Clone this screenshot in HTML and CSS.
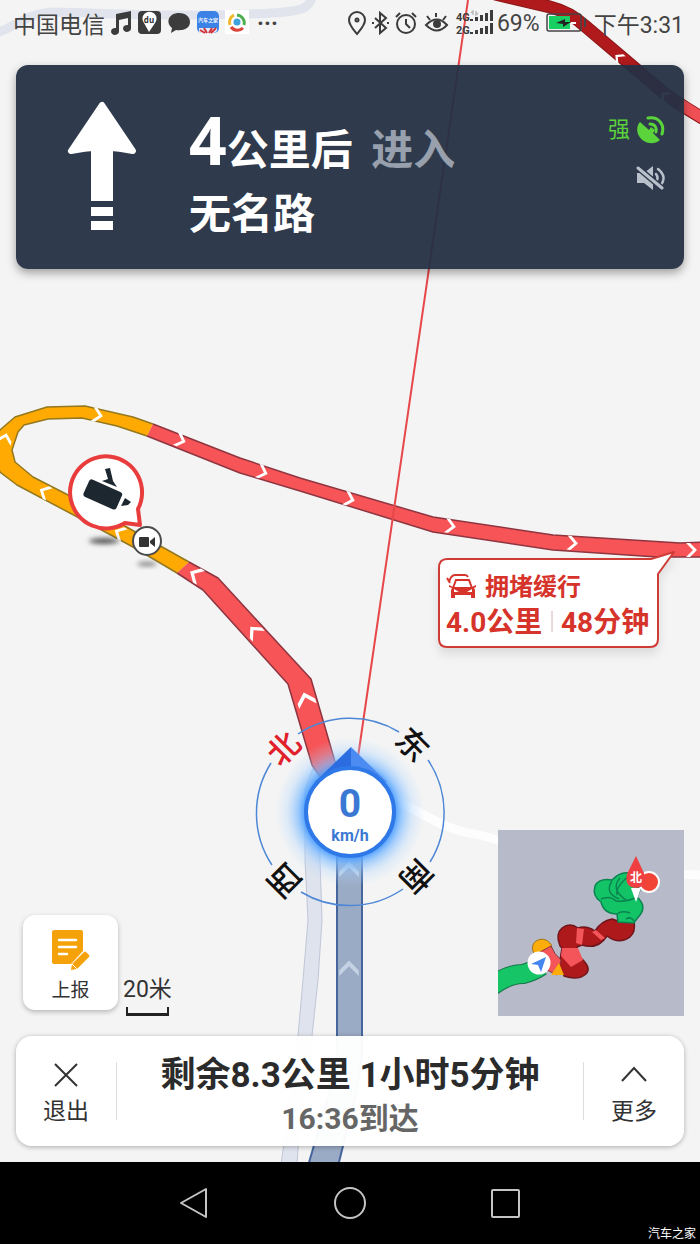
FILE: index.html
```html
<!DOCTYPE html>
<html lang="zh-CN">
<head>
<meta charset="utf-8">
<meta name="viewport" content="width=device-width, initial-scale=1">
<title>导航</title>
<link rel="stylesheet" href="styles.css">
</head>
<body>
<div class="phone">
<main class="screen">
  <svg class="map" viewBox="0 0 700 1162" preserveAspectRatio="xMidYMid slice" role="img" aria-label="导航地图">
    <defs>
      <path id="chev" d="M-5 -7 H-1 L6 0 L-1 7 H-5 L2 0 Z"/>
      <radialGradient id="glow">
        <stop offset="0.58" stop-color="#3d96ff"/>
        <stop offset="0.7" stop-color="#7dbbff" stop-opacity="0.7"/>
        <stop offset="0.84" stop-color="#a5d0ff" stop-opacity="0.3"/>
        <stop offset="1" stop-color="#b8dbff" stop-opacity="0"/>
      </radialGradient>
      <filter id="soft" x="-30%" y="-100%" width="160%" height="300%"><feGaussianBlur stdDeviation="2.5"/></filter>
      <filter id="pinShadow" x="-10%" y="-10%" width="120%" height="140%"><feDropShadow dx="0" dy="6" stdDeviation="5" flood-color="#000" flood-opacity="0.1"/></filter>
    </defs>

    <g fill="none">
      <path stroke="#e1e4ec" stroke-width="9" d="M-4 33 C18 26 28 12 55 12 C100 13 150 16 205 15 C250 14 290 14 304 8 Q311 4 312 -4"/>
      <path stroke="#fdfdfd" stroke-width="9" d="M395 801 C425 812 440 830 480 835 C510 843 540 856 590 864 S660 874 704 875"/>
    </g>
    <path fill="#dfe3ed" stroke="#c0c6d8" d="M314 766 L326 780 L320 800 L320 860 L322 920 L318 980 L312 1036 L298 1150 L297 1164 L281 1164 L283 1150 L298 1036 L303 980 L308 920 L305 860 L305 790 Z"/>
    <path fill="#9aabc5" stroke="#45659c" stroke-width="2" d="M337 830 H362 V1050 Q361 1070 355 1098 L338 1166 H308 L330 1090 Q337 1065 337 1045 Z"/>

    <path fill="none" stroke="#8a1719" stroke-width="13" d="M495 -6 L550 7 Q570 12 585 26 L664 93 Q680 105 704 119"/>
    <path fill="none" stroke="#b01a1d" stroke-width="11" d="M495 -6 L550 7 Q570 12 585 26 L664 93 Q680 105 704 119"/>
    <path fill="none" stroke="#f05055" stroke-width="11" d="M680 104 L704 119"/>

    <path fill="#ffaa02" d="M153 424 L133 417 L85 406 L47 407 L15 417 L0 430 L-9 450 L0 472 L17 485 L83 520 L133 547 L177 573 L189 562 L123 525 L70 496 L33 477 L15 462 L12 450 L18 432 L24 425 L48 419 L82 418 L117 426 L147 436 Z"/>
    <path fill="#f65457" d="M153 424 L240 458 L300 478 L433 517 L553 535 L680 543 L706 542 V557 L657 557 L553 550 L433 532 L300 491 L240 473 L147 436 Z"/>
    <path fill="#f65457" d="M189 562 L218 578 L311 679 L336 765 L336 780 L320 777 L312 765 L288 684 L203 590 L177 573 Z"/>
    <g fill="none" stroke-width="1.5" stroke-linejoin="round">
      <path stroke="#93781f" d="M153 424 L133 417 L85 406 L47 407 L15 417 L0 430 L-9 450 L0 472 L17 485 L83 520 L133 547 L177 573 M189 562 L123 525 L70 496 L33 477 L15 462 L12 450 L18 432 L24 425 L48 419 L82 418 L117 426 L147 436"/>
      <path stroke="#8f3540" d="M153 424 L240 458 L300 478 L433 517 L553 535 L680 543 L706 542 M706 557 L657 557 L553 550 L433 532 L300 491 L240 473 L147 436 M189 562 L218 578 L311 679 L336 765 M320 777 L312 765 L288 684 L203 590 L177 573"/>
    </g>

    <g fill="#fff">
      <use href="#chev" transform="translate(97 415) rotate(12)"/>
      <use href="#chev" transform="translate(180 440) rotate(20)"/>
      <use href="#chev" transform="translate(262 472) rotate(19)"/>
      <use href="#chev" transform="translate(349 499) rotate(17)"/>
      <use href="#chev" transform="translate(450 526) rotate(9)"/>
      <use href="#chev" transform="translate(572 543) rotate(5)"/>
      <use href="#chev" transform="translate(691 550)"/>
      <use href="#chev" transform="translate(5 439) rotate(-75)"/>
      <use href="#chev" transform="translate(45 492) rotate(-152)"/>
      <use href="#chev" transform="translate(120 533) rotate(-152)"/>
      <use href="#chev" transform="translate(196 575) rotate(-150) scale(1.15)"/>
      <use href="#chev" transform="translate(255 632) rotate(-132) scale(1.15)"/>
      <use href="#chev" transform="translate(306 700) rotate(-107) scale(1.3)"/>
      <use href="#chev" transform="translate(619 58) rotate(-140) scale(0.8)"/>
      <use href="#chev" transform="translate(665 96) rotate(-140) scale(0.8)"/>
      <use href="#chev" fill="#c5d2e4" transform="translate(349 870) rotate(-90) scale(1.4)"/>
      <use href="#chev" fill="#c5d2e4" transform="translate(349 969) rotate(-90) scale(1.4)"/>
    </g>
    <path stroke="#e8474a" stroke-width="2" d="M468 0 L358 757"/>

    <ellipse cx="104" cy="541" rx="15" ry="3" fill="#555" filter="url(#soft)"/>
    <ellipse cx="147" cy="564" rx="10" ry="2" fill="#777" filter="url(#soft)"/>
    <path fill="#fff" stroke="#e93d3d" stroke-width="4" stroke-linejoin="round" d="M140 525 L138 509 A36 36 0 1 0 125 523 Z"/>
    <g fill="#1d2730">
      <rect x="-18" y="-9" width="36" height="19" rx="3" transform="translate(103 494) rotate(24)"/>
      <path d="M105 469 L110 468 L113 481 L117 487 L102 481 L108 479 Z"/>
      <path d="M125 498 L131 502 L128 505 L121 506 Z"/>
    </g>
    <circle cx="147" cy="541" r="14" fill="#fff" stroke="#4a4a4a" stroke-width="2"/>
    <rect x="139" y="537" width="10" height="10" rx="1" fill="#333"/><path fill="#333" d="M150 541 L155 537 V547 L150 543 Z"/>

    <g class="jam">
      <path filter="url(#pinShadow)" fill="#fff" stroke="#cf3a36" stroke-width="2" stroke-linejoin="round" d="M447 559 H651 L674 552 L658 574 V639 Q658 647 650 647 H447 Q439 647 439 639 V568 Q439 559 447 559 Z"/>
      <g fill="none" stroke="#d6332b" stroke-width="2"><path d="M447 578 L450 583 M449 582 Q451 575 455 575 H465 Q467 575 468 577"/><path d="M453 588 L456 580 H469 L472 588"/></g>
      <path fill="#d6332b" fill-rule="evenodd" d="M449 585 L453 587 H472 L476 585 V587 L474 588 L475 590 V598 H471 V595 H455 V598 H451 V590 L452 588 L449 587 Z M454 589 V592 H459 Z M472 589 L467 592 H472 Z"/>
      <text x="485" y="595" class="jam-title">拥堵缓行</text>
      <text x="446" y="632" class="jam-data">4.0公里</text>
      <path stroke="#d4b5b5" d="M552 611 V632"/>
      <text x="561" y="632" class="jam-data">48分钟</text>
    </g>

    <circle cx="350" cy="812" r="75" fill="url(#glow)"/>
    <g fill="none" stroke="#4d87d6" stroke-width="1.5">
      <path d="M298 734 A94 94 0 0 1 399 732"/><path d="M428 760 A94 94 0 0 1 430 862"/>
      <path d="M403 889 A94 94 0 0 1 301 892"/><path d="M272 865 A94 94 0 0 1 271 763"/>
    </g>
    <path fill="#2b6de0" d="M351 747 L315 782 H351 Z"/><path fill="#4c8cf2" d="M351 747 L387 782 H351 Z"/>
    <circle cx="350" cy="812" r="44" fill="#fff" stroke="#2f78e8" stroke-width="4"/>
    <g class="speed" text-anchor="middle"><text x="350" y="817" class="speed-num">0</text><text x="350" y="841" class="speed-unit">km/h</text></g>
    <g class="compass" text-anchor="middle">
      <text class="north" transform="translate(284 749) rotate(-45)" y="11">北</text>
      <text transform="translate(412 745) rotate(45)" y="11">东</text>
      <text transform="translate(416 876) rotate(135)" y="11">南</text>
      <text transform="translate(285 880) rotate(-135)" y="11">西</text>
    </g>
  </svg>

  <header class="status">
    <span>中国电信</span>
    <svg class="status-icons" width="142" height="26" viewBox="0 0 142 26">
      <g fill="#3c3c3c">
        <path d="M7 4 L22 1 V18 A4 3.500 0 1 1 19 15 V8 L10 10 V21 A4 3.500 0 1 1 7 18 Z"/>
        <rect x="29" y="1" width="23" height="23" rx="4"/>
        <path d="M70 3 C77 3 81 7 81 12 C81 18 75 21 67 20 L62 23 L63 18 C56 12 60 3 70 3 Z"/>
      </g>
      <path fill="#fff" d="M40 22 L35 13 A7 7 0 1 1 46 13 Z"/><text x="40" y="13" class="tiny-du" text-anchor="middle">du</text>
      <rect x="88" y="1" width="22" height="22" rx="5" fill="#3b82e6"/><text x="99" y="12" class="tiny-app" text-anchor="middle">汽车之家</text>
      <path fill="#e4e8f5" d="M90 18 H108 V21 Q106 23 104 23 H93 Q90 23 90 21 Z"/><path stroke="#d2343a" stroke-width="2" d="M91 20 L96 23 M95 18 L98 23 M103 18 L100 23 M107 18 L102 23"/>
      <rect x="116" y="0" width="24" height="24" fill="#fff"/>
      <g fill="none" stroke-width="3"><path stroke="#f2b92c" d="M125 5 A8 8 0 0 0 121 15"/><path stroke="#dd4439" d="M122 17 A8 8 0 0 0 134 18"/><path stroke="#4caf50" d="M128 5 A8 8 0 0 1 135 15"/></g>
      <circle cx="128" cy="12" r="3.500" fill="#3ea3dc"/>
    </svg>
    <span class="more-dots">···</span>
    <svg class="status-sys" width="146" height="26" viewBox="0 0 146 26">
      <g fill="none" stroke="#3c3c3c" stroke-width="2">
        <path d="M10 24 C6 19 2 15 2 10 A8 8 0 0 1 18 10 C18 15 14 19 10 24 Z"/><circle cx="10" cy="10" r="1.500"/>
        <path d="M28 8 L39 18 L33 23 V3 L39 8 L28 18"/><path d="M25 13 H27 M40 13 H42"/>
        <circle cx="59" cy="14" r="9"/><path d="M59 9 V14 L63 18 M49 7 L53 3 M65 3 L69 7"/>
        <path d="M79 15 Q90 4 100 15 Q90 26 79 15 Z M89 3 V7 M80 6 L83 10 M99 6 L96 10"/>
      </g>
      <circle cx="90" cy="14" r="4" fill="#3c3c3c"/>
      <text x="109" y="11" class="tiny-net">4G</text><text x="109" y="24" class="tiny-net">2G</text>
      <path stroke="#3c3c3c" stroke-width="3" d="M124.500 11 V9 M129.500 11 V7 M134.500 11 V5 M139.500 11 V3 M144.500 11 V0 M124.500 24 V22 M129.500 24 V20 M134.500 24 V18 M139.500 24 V16 M144.500 24 V13"/>
      <path stroke="#bbb" stroke-width="1.500" fill="none" d="M126 5 V1 L124 3 M129 1 V5 L131 3"/>
    </svg>
    <span>69%</span>
    <svg class="status-battery" width="40" height="20" viewBox="0 0 40 20">
      <rect x="1" y="1" width="34" height="17" rx="2" fill="none" stroke="#444" stroke-width="1.500"/>
      <rect x="3" y="3" width="21" height="13" fill="#18cf62"/><path stroke="#444" stroke-width="2" d="M39 5 V14"/>
      <path fill="#222" d="M10 10 L19 6 V9 H25 L17 14 V11 Z"/><path fill="#fff" d="M25 9 H30 V11 H24 Z"/>
    </svg>
    <span>下午3:31</span>
  </header>

  <section class="banner" aria-label="下一步">
    <svg class="arrow" width="70" height="130" viewBox="0 0 70 130" aria-hidden="true">
      <path fill="#fff" stroke="#fff" stroke-width="6" stroke-linejoin="round" d="M35 4 L4 50 Q20 47 27 47 H43 Q50 47 66 50 Z"/>
      <path fill="#fff" d="M24 44 H46 V100 H24 Z M24 106 H46 V115 H24 Z M24 120 H46 V129 H24 Z"/>
    </svg>
    <h1 class="turn"><span class="turn-line"><span class="num">4</span>公里后 <span class="dim">进入</span></span><span class="turn-line">无名路</span></h1>
    <div class="signals">
      <div class="gps"><span>强</span>
        <svg width="30" height="30" viewBox="0 0 30 30" aria-hidden="true"><path fill="#5bd33a" d="M4 7 L13 15 L15 12 L19 15 L17 18 L24 25 C17 31 7 28 3 21 C0 16 1 10 4 7 Z"/><g fill="none" stroke="#5bd33a" stroke-width="3" stroke-linecap="round"><path d="M12 3 C22 1 29 9 26 19"/><path d="M14 9 C19 9 21 13 20 17"/></g></svg>
      </div>
      <button class="mute" aria-label="静音">
        <svg width="30" height="26" viewBox="0 0 30 26" aria-hidden="true"><path fill="#b9c1cb" d="M1 8 H8 L17 1 V25 L8 18 H1 Z"/><g fill="none" stroke="#b9c1cb" stroke-width="2.500" stroke-linecap="round"><path d="M20 9 Q23 13 20 17"/><path d="M22 4 Q32 12 24 21"/></g><path stroke="#2f3a4c" stroke-width="6" d="M1 2 L27 24"/><path stroke="#b9c1cb" stroke-width="3" stroke-linecap="round" d="M2 3 L26 23"/></svg>
      </button>
    </div>
  </section>

  <div class="tools">
    <button class="report">
      <svg width="38" height="42" viewBox="0 0 38 42" aria-hidden="true"><path fill="#f5a20a" d="M3 0 H29 Q31 0 31 2 V21 L19 34 H3 Q0 34 0 32 V2 Q0 0 3 0 Z"/><path stroke="#fff" stroke-width="2.500" stroke-linecap="round" d="M7 10 H24 M7 17 H24 M7 24 H15"/><path fill="#f5a20a" d="M20 34 L32 22 Q33 21 34 22 L37 25 Q38 26 37 27 L25 39 L19 40 Z"/><path stroke="#fff" d="M20 34 L25 39"/></svg>
      <span>上报</span>
    </button>
    <div class="scale">20米</div>
    <svg class="mini" width="186" height="186" viewBox="0 0 186 186" role="img" aria-label="路线概览">
      <rect width="186" height="186" fill="#b7bbc9"/>
      <path fill="none" stroke="#17754a" stroke-width="20" d="M-6 156 Q10 144 25 144 Q36 141 43 136"/>
      <path fill="none" stroke="#16c565" stroke-width="18" d="M-6 156 Q10 144 25 144 Q36 141 43 136"/>
      <path fill="#ae191c" stroke="#70151b" stroke-width="1.500" stroke-linejoin="round" d="M62 116 Q57 104 64 98 Q72 92 80 98 Q88 95 97 101 Q103 91 114 89 Q127 94 136 91 Q138 102 132 107 Q121 115 109 106 Q100 120 84 115 L79 117 Q79 124 83 128 Q94 138 88 144 Q80 151 66 146 L61 136 L64 118 Z"/>
      <g stroke="#0b8351" stroke-width="1.500" fill="#12c465">
        <path d="M120 92 L119 84 Q106 84 103 72 Q94 66 97 56 Q101 48 114 50 Q122 41 132 43 L142 60 L139 67 Q149 76 142 85 Q137 91 136 93 Z"/>
        <path fill="none" d="M103 69 Q112 65 118 71 Q130 72 139 67 M114 51 Q106 63 121 69 M122 48 Q112 59 128 70 M132 45 Q117 57 119 65 M119 84 Q124 80 132 83 M128 89 Q133 86 136 91"/>
      </g>
      <path fill="#f4555a" d="M79 98 L86 99 L84 115 L78 113 Z M98 100 L107 108 L103 110 L94 102 Z M64 118 L80 118 L85 130 L73 137 L63 126 Z"/>
      <path fill="#fcac0b" stroke="#9e7520" d="M36 124 Q32 115 38 111 Q46 106 53 114 L54 119 L41 130 Z"/>
      <path fill="#f4555a" stroke="#8b3437" d="M42 122 L53 116 Q56 124 63 130 L59 145 L47 139 Z"/>
      <path fill="#fcac0b" d="M61 133 L66 145 L53 145 Z"/>
      <circle cx="41" cy="133" r="11.500" fill="#fff"/><path fill="#4485ef" d="M33 134 L48 127 L43 142 L40 135 Z"/>
      <circle cx="151" cy="52" r="10" fill="#f14336" stroke="#fff" stroke-width="2"/>
      <path fill="#fff" d="M133 58 H143 L138 72 Z"/><path fill="#ef3f42" d="M138 26 L146 43 Q150 57 138 58 Q126 57 129 44 Z"/>
      <text x="138" y="52" class="mini-north" text-anchor="middle">北</text>
    </svg>
  </div>

  <section class="trip">
    <button class="side"><svg width="28" height="28" viewBox="0 0 28 28" aria-hidden="true"><path fill="none" stroke="#333" stroke-width="2" d="M3 3 L25 25 M25 3 L3 25"/></svg><span>退出</span></button>
    <div class="summary"><div class="remain">剩余8.3公里 1小时5分钟</div><div class="eta">16:36到达</div></div>
    <button class="side"><svg width="28" height="28" viewBox="0 0 28 28" aria-hidden="true"><path fill="none" stroke="#333" stroke-width="2" d="M2 20 L14 7 L26 20"/></svg><span>更多</span></button>
  </section>
</main>

<nav class="keys">
  <button aria-label="返回"><svg width="34" height="34" viewBox="0 0 34 34"><path fill="none" stroke="#c4c4c4" stroke-width="2" stroke-linejoin="round" d="M4 17 L29 3 V31 Z"/></svg></button>
  <button aria-label="主页"><svg width="34" height="34" viewBox="0 0 34 34"><circle cx="17" cy="17" r="15" fill="none" stroke="#c4c4c4" stroke-width="2"/></svg></button>
  <button aria-label="最近任务"><svg width="34" height="34" viewBox="0 0 34 34"><rect x="3" y="4" width="27" height="27" rx="1" fill="none" stroke="#c4c4c4" stroke-width="2"/></svg></button>
  <span class="mark">汽车之家</span>
</nav>
</div>
</body>
</html>
```
FILE: styles.css
```css
* { box-sizing: border-box; }
body { margin: 0; font-family: Roboto, "Noto Sans CJK SC", sans-serif; color: #333; }
button { border: 0; padding: 0; background: none; font: inherit; color: inherit; }
svg { display: block; flex: none; }

.phone { display: flex; flex-direction: column; min-height: 100vh; background: #000; }
.screen { position: relative; flex: 1; display: flex; flex-direction: column; background: #f4f4f4; overflow: hidden; }
.map { position: absolute; inset: 0; width: 100%; height: 100%; z-index: 0; }
.status, .banner, .tools, .trip { position: relative; z-index: 1; }

.status { display: flex; align-items: center; height: 46px; margin-bottom: 19px; padding: 0 16px 0 13px; font-size: 23px; white-space: nowrap; color: #444; }
.status-icons { margin-left: 4px; }
.more-dots { margin-left: 6px; font-weight: 700; }
.status-sys { margin-left: auto; margin-right: 4px; }
.status-battery { margin: 0 8px 0 6px; }
.tiny-du { font: 700 8px "Open Sans", sans-serif; fill: #333; }
.tiny-app { font: 700 5px "Noto Sans CJK SC", sans-serif; fill: #fff; }
.tiny-net { font: 700 11px Roboto, sans-serif; fill: #3c3c3c; }

.banner { display: flex; min-height: 204px; margin: 0 16px; padding: 36px 18px 0 51px; border-radius: 12px; background: rgba(36, 48, 67, .95); box-shadow: 0 4px 10px rgba(0, 0, 0, .35); color: #fff; }
.turn { flex: 1; margin: 8px 0 0 52px; font-size: 42px; font-weight: 700; line-height: 64px; }
.turn-line { display: block; white-space: pre; }
.num { font-family: "Noto Sans", sans-serif; font-size: 66px; line-height: 60px; }
.dim { margin-left: 8px; color: #97a0ac; }
.signals { display: flex; flex-direction: column; align-items: flex-end; gap: 20px; padding-top: 14px; }
.gps { display: flex; align-items: center; gap: 6px; font-size: 22px; line-height: 30px; color: #5bd33a; }

.tools { display: flex; align-items: flex-end; margin: auto 16px 20px 23px; }
.report { display: flex; flex-direction: column; align-items: center; width: 95px; height: 95px; margin-bottom: 6px; padding-top: 15px; border-radius: 12px; background: #fff; box-shadow: 0 2px 5px rgba(0, 0, 0, .25); font-size: 19px; line-height: 26px; gap: 6px; }
.scale { position: relative; margin-left: 5px; padding-bottom: 10px; font-size: 23px; line-height: 32px; }
.scale::after { content: ""; position: absolute; left: 3px; right: 3px; bottom: 0; height: 6px; border: solid #222; border-width: 0 2px 3px; }
.mini { margin-left: auto; }
.mini-north { font: 700 12px "Noto Sans CJK SC", sans-serif; fill: #fff; }

.trip { display: flex; align-items: center; min-height: 110px; margin: 0 16px 16px; border-radius: 16px; background: rgba(255, 255, 255, .97); box-shadow: 0 1px 5px rgba(0, 0, 0, .3); }
.side { display: flex; flex-direction: column; align-items: center; width: 100px; gap: 8px; padding-top: 6px; font-size: 23px; line-height: 30px; }
.summary { flex: 1; display: flex; flex-direction: column; justify-content: center; height: 58px; padding-top: 10px; border: solid #ddd; border-width: 0 1px; text-align: center; font-weight: 700; white-space: nowrap; }
.remain { font-size: 35px; line-height: 46px; color: #2b2b2b; }
.eta { font-size: 30px; line-height: 40px; color: #666; }

.keys { position: relative; display: flex; justify-content: center; align-items: center; gap: 122px; height: 82px; background: #000; }
.mark { position: absolute; right: 4px; bottom: 2px; font-size: 12px; line-height: 16px; color: #fff; }

.jam-title { font-size: 24px; font-weight: 700; fill: #d6332b; }
.jam-data { font-size: 28px; font-weight: 700; fill: #d6332b; }
.speed { fill: #3a78d4; font-weight: 700; }
.speed-num { font-size: 39px; }
.speed-unit { font-size: 16px; }
.compass { font-size: 32px; font-weight: 500; fill: #111; }
.compass .north { fill: #e0202b; }
```
